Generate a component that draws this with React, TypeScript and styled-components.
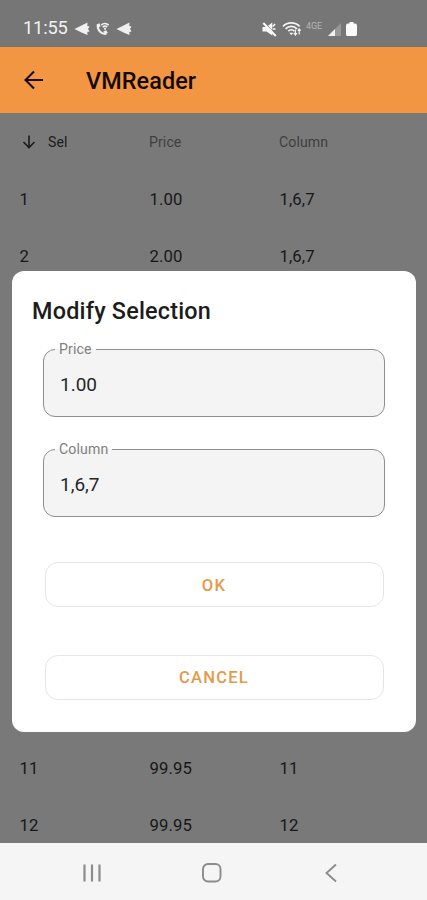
import React from "react";
import styled, { createGlobalStyle } from "styled-components";

const Global = createGlobalStyle`
  *, *::before, *::after { box-sizing: border-box; }
  body { margin: 0; font-family: Roboto, "Liberation Sans", sans-serif; }
  button { font: inherit; background: none; border: 0; padding: 0; }
`;

const Screen = styled.div`
  position: relative;
  width: 427px;
  height: 900px;
  overflow: hidden;
  display: flex;
  flex-direction: column;
  background: #797979;
`;

const StatusBar = styled.div`
  height: 46.5px;
  flex: none;
  padding: 10px 69px 0 23px;
  display: flex;
  align-items: center;
  justify-content: space-between;
  background: #767676;
  color: #f2f2f2;
`;

const StatusGroup = styled.div`
  display: flex;
  align-items: center;
`;

const Clock = styled.span`
  font-size: 18.3px;
  line-height: 20px;
  width: 51px;
  letter-spacing: -0.2px;
`;

const AppBar = styled.header`
  height: 66.5px;
  flex: none;
  display: flex;
  align-items: center;
  padding: 2px 0 0 20px;
  background: #f39643;
`;

const BackButton = styled.button`
  width: 66px;
  height: 28px;
  padding-bottom: 2px;
  display: flex;
  align-items: center;
`;

const AppTitle = styled.h1`
  margin: 0;
  font-size: 23.4px;
  font-weight: 500;
  letter-spacing: 0.1px;
  color: #120b05;
`;

const Table = styled.div`
  flex: 1;
  min-height: 0;
  overflow: hidden;
`;

const Row = styled.div<{ $head?: boolean }>`
  display: grid;
  grid-template-columns: 130px 130px 1fr;
  align-items: center;
  height: ${(p) => (p.$head ? 57.5 : 56.9)}px;
  padding: ${(p) => (p.$head ? "1px 19px" : "2px 19px 0 19.5px")};
  font-size: ${(p) => (p.$head ? 14.1 : 16.7)}px;
  letter-spacing: 0.1px;
  color: ${(p) => (p.$head ? "#3f3f3f" : "#171717")};
`;

/* Blank stretch of the list covered by the dialog */
const CoveredRows = styled.div<{ $count: number }>`
  height: ${(p) => p.$count * 56.9}px;
`;

const SortCell = styled.span`
  display: flex;
  align-items: center;
  gap: 11px;
  color: #1c1c1c;
`;

const NavBar = styled.nav`
  height: 57px;
  flex: none;
  display: flex;
  justify-content: center;
  align-items: center;
  gap: 96px;
  padding: 3px 4px 0 0;
  background: #f5f5f5;
`;

const NavButton = styled.button`
  width: 24px;
  height: 24px;
  display: flex;
`;

const Dialog = styled.section`
  position: absolute;
  left: 12px;
  top: 271px;
  width: 404px;
  height: 461px;
  border-radius: 12px;
  background: #fff;
  padding: 26px 31px 0;
  display: flex;
  flex-direction: column;
`;

const DialogTitle = styled.h2`
  margin: 0 0 16px -11px;
  font-size: 23.4px;
  line-height: 28px;
  height: 28px;
  font-weight: 500;
  letter-spacing: 0.2px;
  color: #1c1c1c;
`;

const Field = styled.fieldset`
  margin: 0 0 24px;
  padding: 0 15px;
  min-width: 0;
  width: 342px;
  height: 76px;
  border: 1.4px solid #8f8f8f;
  border-radius: 12px;
  background: #f4f4f4;
`;

const FieldLabel = styled.legend`
  margin-left: -4px;
  padding: 0 4px;
  font-size: 14.1px;
  line-height: 16px;
  letter-spacing: 0.15px;
  color: #808080;
`;

const FieldInput = styled.input`
  display: block;
  width: 100%;
  height: 55px;
  padding: 0 1px;
  border: 0;
  outline: 0;
  background: transparent;
  font: 19px Roboto, sans-serif;
  color: #262626;
`;

const DialogButton = styled.button<{ $gap: number }>`
  flex: none;
  width: 339px;
  height: 45px;
  margin: ${(p) => p.$gap}px auto 0 1.5px;
  padding-top: 1px;
  border: 1px solid #e6e6e6;
  border-radius: 13px;
  font-size: 16.6px;
  font-weight: 500;
  letter-spacing: 1.2px;
  color: #e39a4c;
`;

const Plane = () => (
  <svg width="16" height="16" viewBox="0 0 16 16" fill="#f0f0f0">
    <path d="M0.5 8 L8 4.300 L13.500 1.500 L13.300 5 L15.6 5.5 L14 8 L15.6 10.5 L13.300 11 L13.500 14 L8 11.7Z" />
  </svg>
);

const WifiCall = () => (
  <svg width="14" height="16" viewBox="0 0 14 16" fill="none" stroke="#f0f0f0">
    <path d="M1.8 3.5C1.1 8.8 4.7 13.5 10.3 12.7" strokeWidth="2.2" />
    <path d="M1 3.3l2.5-1 1 3-2 1.5zM7.2 10.5l3-1.2 1.6 2.5-2 1.5z" fill="#f0f0f0" stroke="none" />
    <path d="M5.2 4.1c2-2 5.3-2 7.6 0M6.8 6.1c1.4-1.2 3-1.2 4.4 0" strokeWidth="1.6" />
    <circle cx="9" cy="7.8" r="1.1" fill="#f0f0f0" stroke="none" />
  </svg>
);

const Muted = () => (
  <svg width="15" height="16" viewBox="0 0 15 16" fill="#f8f8f8">
    <path d="M.5 6h4l5.8-4.5v13L4.5 10.5h-4z" />
    <path d="M10.8 5.5l2.3-2.5M11 8h2.5" stroke="#f8f8f8" strokeWidth="1.5" />
    <path d="M2.2 1.200l12 12.5" stroke="#767676" strokeWidth="1" />
    <path d="M1.3 2l12.500 13" stroke="#f8f8f8" strokeWidth="2" />
  </svg>
);

const Wifi = () => (
  <svg width="20" height="16" viewBox="0 0 20 16" fill="none" stroke="#f4f4f4" strokeWidth="1.7">
    <path d="M1 5.4C5.6.8 13 .8 17.6 5.4M3.6 7.8c3.2-3.2 8.2-3.2 11.4 0M6.3 10.2c1.7-1.7 4.3-1.7 6 0" />
    <path d="M9.3 14.2l-2-2.4h4z" fill="#f4f4f4" stroke="none" />
    <path d="M13.4 14V8.5M11.8 12.2l1.6 1.8 1.5-1.8M17.2 8v5.5M15.7 9.6L17.2 8l1.4 1.6" strokeWidth="1.2" />
  </svg>
);

const NetworkType = styled.span`
  width: 17px;
  height: 16px;
  font-size: 9px;
  line-height: 10px;
  letter-spacing: -0.1px;
  color: #b4b4b4;
`;

const Signal = () => (
  <svg width="14" height="16" viewBox="0 0 14 16">
    <path d="M0 15L13 2v13z" fill="#989898" />
    <path d="M0 15L7 8v7z" fill="#f0f0f0" />
  </svg>
);

const Battery = () => (
  <svg width="12" height="16" viewBox="0 0 12 16" fill="#fafafa">
    <path d="M3.5 1h4v1.5H9A2 2 0 0 1 11 4.500v9A1.500 1.500 0 0 1 9.500 15h-8A1.500 1.500 0 0 1 0 13.500v-9A2 2 0 0 1 2 2.500h1.500z" />
  </svg>
);

const LeftIcons = styled(StatusGroup)`
  gap: 6px;
  margin-top: 1px;
`;

const RightIcons = styled(StatusGroup)`
  margin-top: 1px;
  gap: 4.5px;
`;

const topRows = [
  ["1", "1.00", "1,6,7"],
  ["2", "2.00", "1,6,7"],
];

const bottomRows = [
  ["11", "99.95", "11"],
  ["12", "99.95", "12"],
];

const DataRows = ({ rows }: { rows: string[][] }) => (
  <>
    {rows.map(([sel, price, column]) => (
      <Row key={sel}>
        <span>{sel}</span>
        <span>{price}</span>
        <span>{column}</span>
      </Row>
    ))}
  </>
);

export default function App() {
  return (
    <Screen>
      <Global />
      <StatusBar>
        <StatusGroup>
          <Clock>11:55</Clock>
          <LeftIcons>
            <Plane />
            <WifiCall />
            <Plane />
          </LeftIcons>
        </StatusGroup>
        <RightIcons>
          <Muted />
          <Wifi />
          <NetworkType>4GE</NetworkType>
          <Signal />
          <Battery />
        </RightIcons>
      </StatusBar>
      <AppBar>
        <BackButton aria-label="Back">
          <svg width="28" height="28" viewBox="0 0 28 28" fill="none" stroke="#1a0e04" strokeWidth="2.1">
            <path d="M23 14H6M14 5.500L5.500 14l8.500 8.500" />
          </svg>
        </BackButton>
        <AppTitle>VMReader</AppTitle>
      </AppBar>
      <Table>
        <Row $head>
          <SortCell>
            <svg width="18" height="18" viewBox="0 0 18 18" fill="none" stroke="#1c1c1c" strokeWidth="1.6">
              <path d="M10 2.500v12M4.500 9l5.500 5.500L15.500 9" />
            </svg>
            Sel
          </SortCell>
          <span>Price</span>
          <span>Column</span>
        </Row>
        <DataRows rows={topRows} />
        <CoveredRows $count={8} />
        <DataRows rows={bottomRows} />
      </Table>
      <NavBar>
        <NavButton aria-label="Recents">
          <svg width="24" height="24" viewBox="0 0 24 24" stroke="#8c8c8c" strokeWidth="2.200">
            <path d="M4.500 3.500v17M12 3.500v17M19.500 3.500v17" />
          </svg>
        </NavButton>
        <NavButton aria-label="Home">
          <svg width="24" height="24" viewBox="0 0 24 24" fill="none" stroke="#8c8c8c" strokeWidth="1.900">
            <rect x="3" y="3" width="17.500" height="17.500" rx="5" />
          </svg>
        </NavButton>
        <NavButton aria-label="Back">
          <svg width="24" height="24" viewBox="0 0 24 24" fill="none" stroke="#8c8c8c" strokeWidth="1.900">
            <path d="M16 3.500L6.500 12l9.500 8.500" />
          </svg>
        </NavButton>
      </NavBar>
      <Dialog role="dialog">
        <DialogTitle>Modify Selection</DialogTitle>
        <Field>
          <FieldLabel>Price</FieldLabel>
          <FieldInput defaultValue="1.00" />
        </Field>
        <Field>
          <FieldLabel>Column</FieldLabel>
          <FieldInput defaultValue="1,6,7" />
        </Field>
        <DialogButton $gap={21}>OK</DialogButton>
        <DialogButton $gap={47.5}>CANCEL</DialogButton>
      </Dialog>
    </Screen>
  );
}
